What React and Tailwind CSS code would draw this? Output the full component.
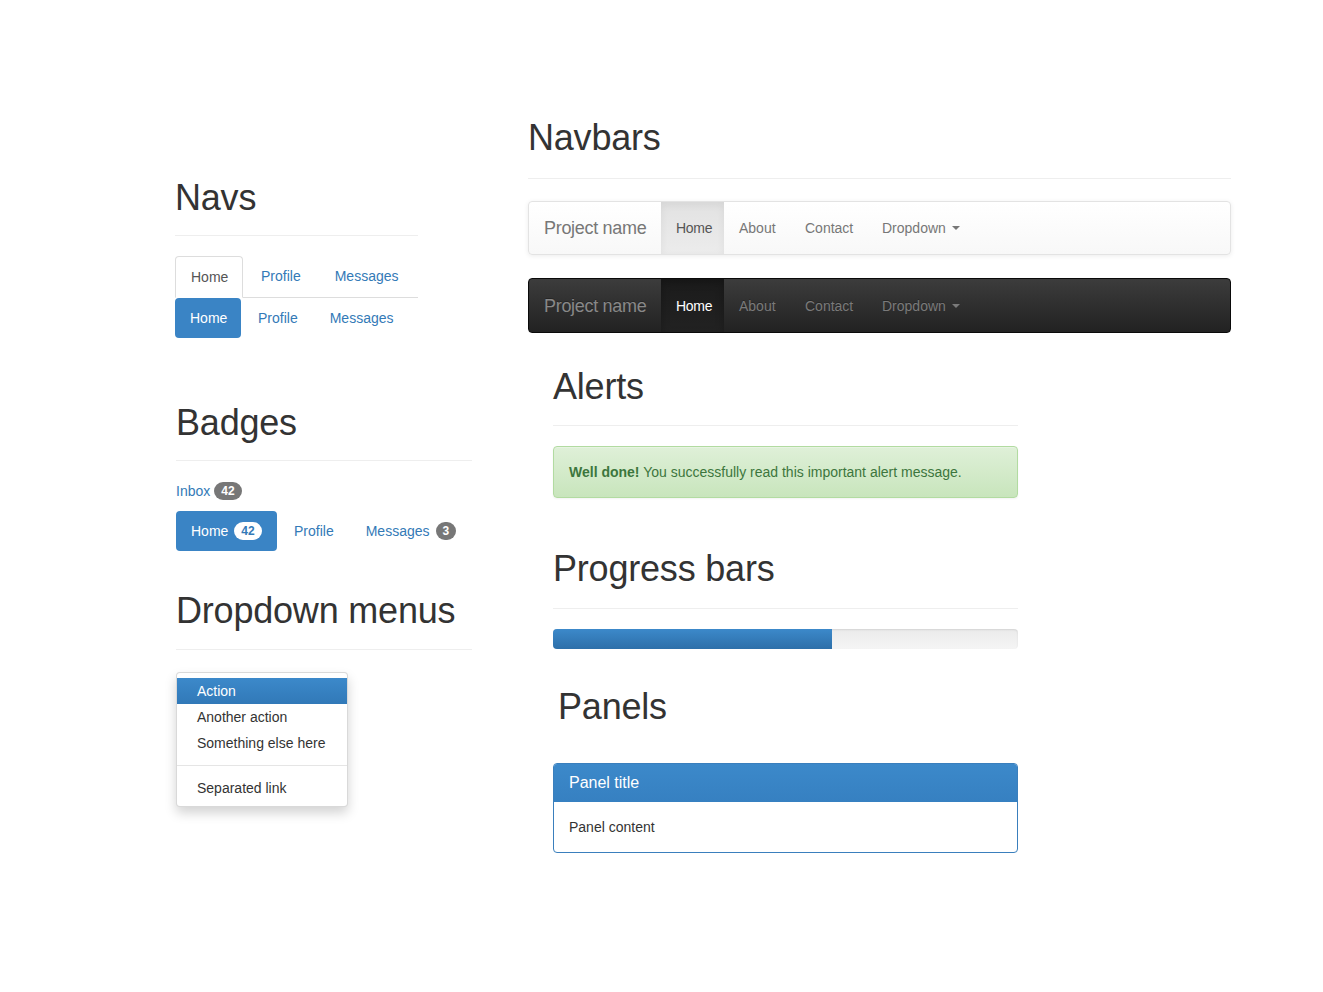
import React from "react";

const H1 = ({ children, className = "" }) => (
  <h1 className={`text-[36px] leading-[40px] font-normal tracking-[-0.2px] text-[#333] ${className}`}>{children}</h1>
);

const Caret = ({ color }) => (
  <span
    className="ml-[6px] inline-block h-0 w-0 border-x-[4px] border-t-[4px] border-x-transparent align-middle"
    style={{ borderTopColor: color }}
  />
);

function LightNavbar() {
  return (
    <div className="mt-[22px] flex h-[54px] overflow-hidden rounded-[4px] border border-[#e3e3e3] bg-gradient-to-b from-white to-[#f8f8f8] shadow-[0_1px_5px_rgba(0,0,0,0.08)]">
      <div className="flex w-[132px] items-center pl-[15px] text-[18px] tracking-[-0.3px] text-[#777]">Project name</div>
      <div className="flex w-[63px] items-center bg-gradient-to-b from-[#e2e2e2] to-[#ececec] pl-[15px] tracking-[-0.3px] text-[#555] shadow-[inset_0_3px_9px_rgba(0,0,0,0.06)]">Home</div>
      <div className="flex w-[66px] items-center pl-[15px] text-[#777]">About</div>
      <div className="flex w-[77px] items-center pl-[15px] text-[#777]">Contact</div>
      <div className="flex items-center pl-[15px] text-[#777]">
        Dropdown
        <Caret color="#777" />
      </div>
    </div>
  );
}

function DarkNavbar() {
  return (
    <div className="mt-[23px] flex h-[55px] overflow-hidden rounded-[4px] border border-[#0a0a0a] bg-gradient-to-b from-[#3c3c3c] to-[#222]">
      <div className="flex w-[132px] items-center pl-[15px] text-[18px] tracking-[-0.3px] text-[#888] [text-shadow:0_-1px_0_rgba(0,0,0,0.25)]">Project name</div>
      <div className="flex w-[63px] items-center bg-gradient-to-b from-[#1b1b1b] to-[#222] pl-[15px] tracking-[-0.3px] text-white shadow-[inset_0_3px_9px_rgba(0,0,0,0.25)]">Home</div>
      <div className="flex w-[66px] items-center pl-[15px] text-[#7a7a7a] [text-shadow:0_-1px_0_rgba(0,0,0,0.25)]">About</div>
      <div className="flex w-[77px] items-center pl-[15px] text-[#7a7a7a] [text-shadow:0_-1px_0_rgba(0,0,0,0.25)]">Contact</div>
      <div className="flex items-center pl-[15px] text-[#7a7a7a] [text-shadow:0_-1px_0_rgba(0,0,0,0.25)]">
        Dropdown
        <Caret color="#7a7a7a" />
      </div>
    </div>
  );
}

const Badge = ({ children, light = false, gap = "ml-[6px]" }) => (
  <span
    className={`${gap} inline-flex h-[18px] items-center rounded-[10px] px-[7px] text-[12px] font-bold leading-none ${
      light ? "bg-white text-[#337ab7]" : "bg-[#777] text-white"
    }`}
  >
    {children}
  </span>
);

export default function App() {
  return (
    <div className="min-h-[992px] bg-white font-['Liberation_Sans',Arial,Helvetica,sans-serif] text-[14px] leading-[20px] text-[#333]">
      <div className="flex pl-[175px]">
        {/* Left column */}
        <div className="w-[297px] pt-[178px]">
          {/* Navs */}
          <div className="w-[243px]">
            <H1 className="border-b border-[#eee] pb-[17px]">Navs</H1>
            <div className="mt-[20px] flex border-b border-[#ddd]">
              <div className="-mb-px h-[42px] w-[68px] rounded-t-[4px] border border-[#ddd] border-b-white bg-white pl-[15px] leading-[41px] text-[#555]">
                Home
              </div>
              <div className="ml-[2px] px-[16px] leading-[41px] text-[#337ab7]">Profile</div>
              <div className="ml-[2px] px-[16px] leading-[41px] text-[#337ab7]">Messages</div>
            </div>
            <div className="flex">
              <div className="h-[40px] w-[66px] rounded-[4px] bg-[#3a84c5] pl-[15px] leading-[40px] text-white">Home</div>
              <div className="ml-[2px] px-[15px] leading-[40px] text-[#337ab7]">Profile</div>
              <div className="ml-[2px] px-[15px] leading-[40px] text-[#337ab7]">Messages</div>
            </div>
          </div>

          {/* Badges */}
          <div className="ml-px mt-[65px] w-[296px]">
            <H1 className="border-b border-[#eee] pb-[17px]">Badges</H1>
            <div className="mt-[20px] flex h-[20px] items-center text-[#337ab7]">
              Inbox
              <Badge gap="ml-[4px]">42</Badge>
            </div>
            <div className="mt-[10px] flex">
              <div className="flex h-[40px] w-[101px] items-center rounded-[4px] bg-[#3a84c5] pl-[15px] text-white">
                Home
                <Badge light>42</Badge>
              </div>
              <div className="ml-[2px] flex h-[40px] items-center px-[15px] text-[#337ab7]">Profile</div>
              <div className="ml-[2px] flex h-[40px] items-center px-[15px] text-[#337ab7]">
                Messages
                <Badge>3</Badge>
              </div>
            </div>
          </div>

          {/* Dropdown menus */}
          <div className="ml-px mt-[40px] w-[296px]">
            <H1 className="border-b border-[#eee] pb-[18px]">Dropdown menus</H1>
            <div className="mt-[22px] w-[172px] rounded-[4px] border border-[rgba(0,0,0,0.15)] bg-white py-[5px] shadow-[0_6px_12px_rgba(0,0,0,0.175)]">
              <div className="bg-gradient-to-b from-[#3c89ca] to-[#3179b8] px-[20px] py-[3px] text-white">Action</div>
              <div className="px-[20px] py-[3px]">Another action</div>
              <div className="px-[20px] py-[3px]">Something else here</div>
              <div className="my-[9px] h-px bg-[#e5e5e5]" />
              <div className="px-[20px] py-[3px]">Separated link</div>
            </div>
          </div>
        </div>

        {/* Right column */}
        <div className="ml-[56px] w-[703px] pt-[118px]">
          <H1 className="border-b border-[#eee] pb-[20px]">Navbars</H1>
          <LightNavbar />
          <DarkNavbar />

          <div className="ml-[25px] w-[465px]">
            <H1 className="mt-[34px] border-b border-[#eee] pb-[18px]">Alerts</H1>
            <div className="mt-[20px] rounded-[4px] border border-[#b2dba1] bg-gradient-to-b from-[#dff0d8] to-[#c8e5bc] p-[15px] text-[#3c763d] shadow-[inset_0_1px_0_rgba(255,255,255,0.25),0_1px_2px_rgba(0,0,0,0.05)]">
              <strong className="font-bold">Well done!</strong> You successfully read this important alert message.
            </div>

            <H1 className="mt-[51px] border-b border-[#eee] pb-[19px]">Progress bars</H1>
            <div className="mt-[20px] h-[20px] overflow-hidden rounded-[4px] bg-gradient-to-b from-[#ebebeb] to-[#f5f5f5] shadow-[inset_0_1px_2px_rgba(0,0,0,0.1)]">
              <div className="h-full w-[60%] bg-gradient-to-b from-[#3c89ca] to-[#2d6fa9]" />
            </div>

            <H1 className="mt-[38px] pl-[5px]">Panels</H1>
            <div className="mt-[36px] overflow-hidden rounded-[4px] border border-[#3a7fbd] bg-white">
              <div className="bg-gradient-to-b from-[#3c89ca] to-[#3680c1] px-[15px] py-[10px] text-[16px] leading-[17.6px] text-white">
                Panel title
              </div>
              <div className="p-[15px]">Panel content</div>
            </div>
          </div>
        </div>
      </div>
    </div>
  );
}
